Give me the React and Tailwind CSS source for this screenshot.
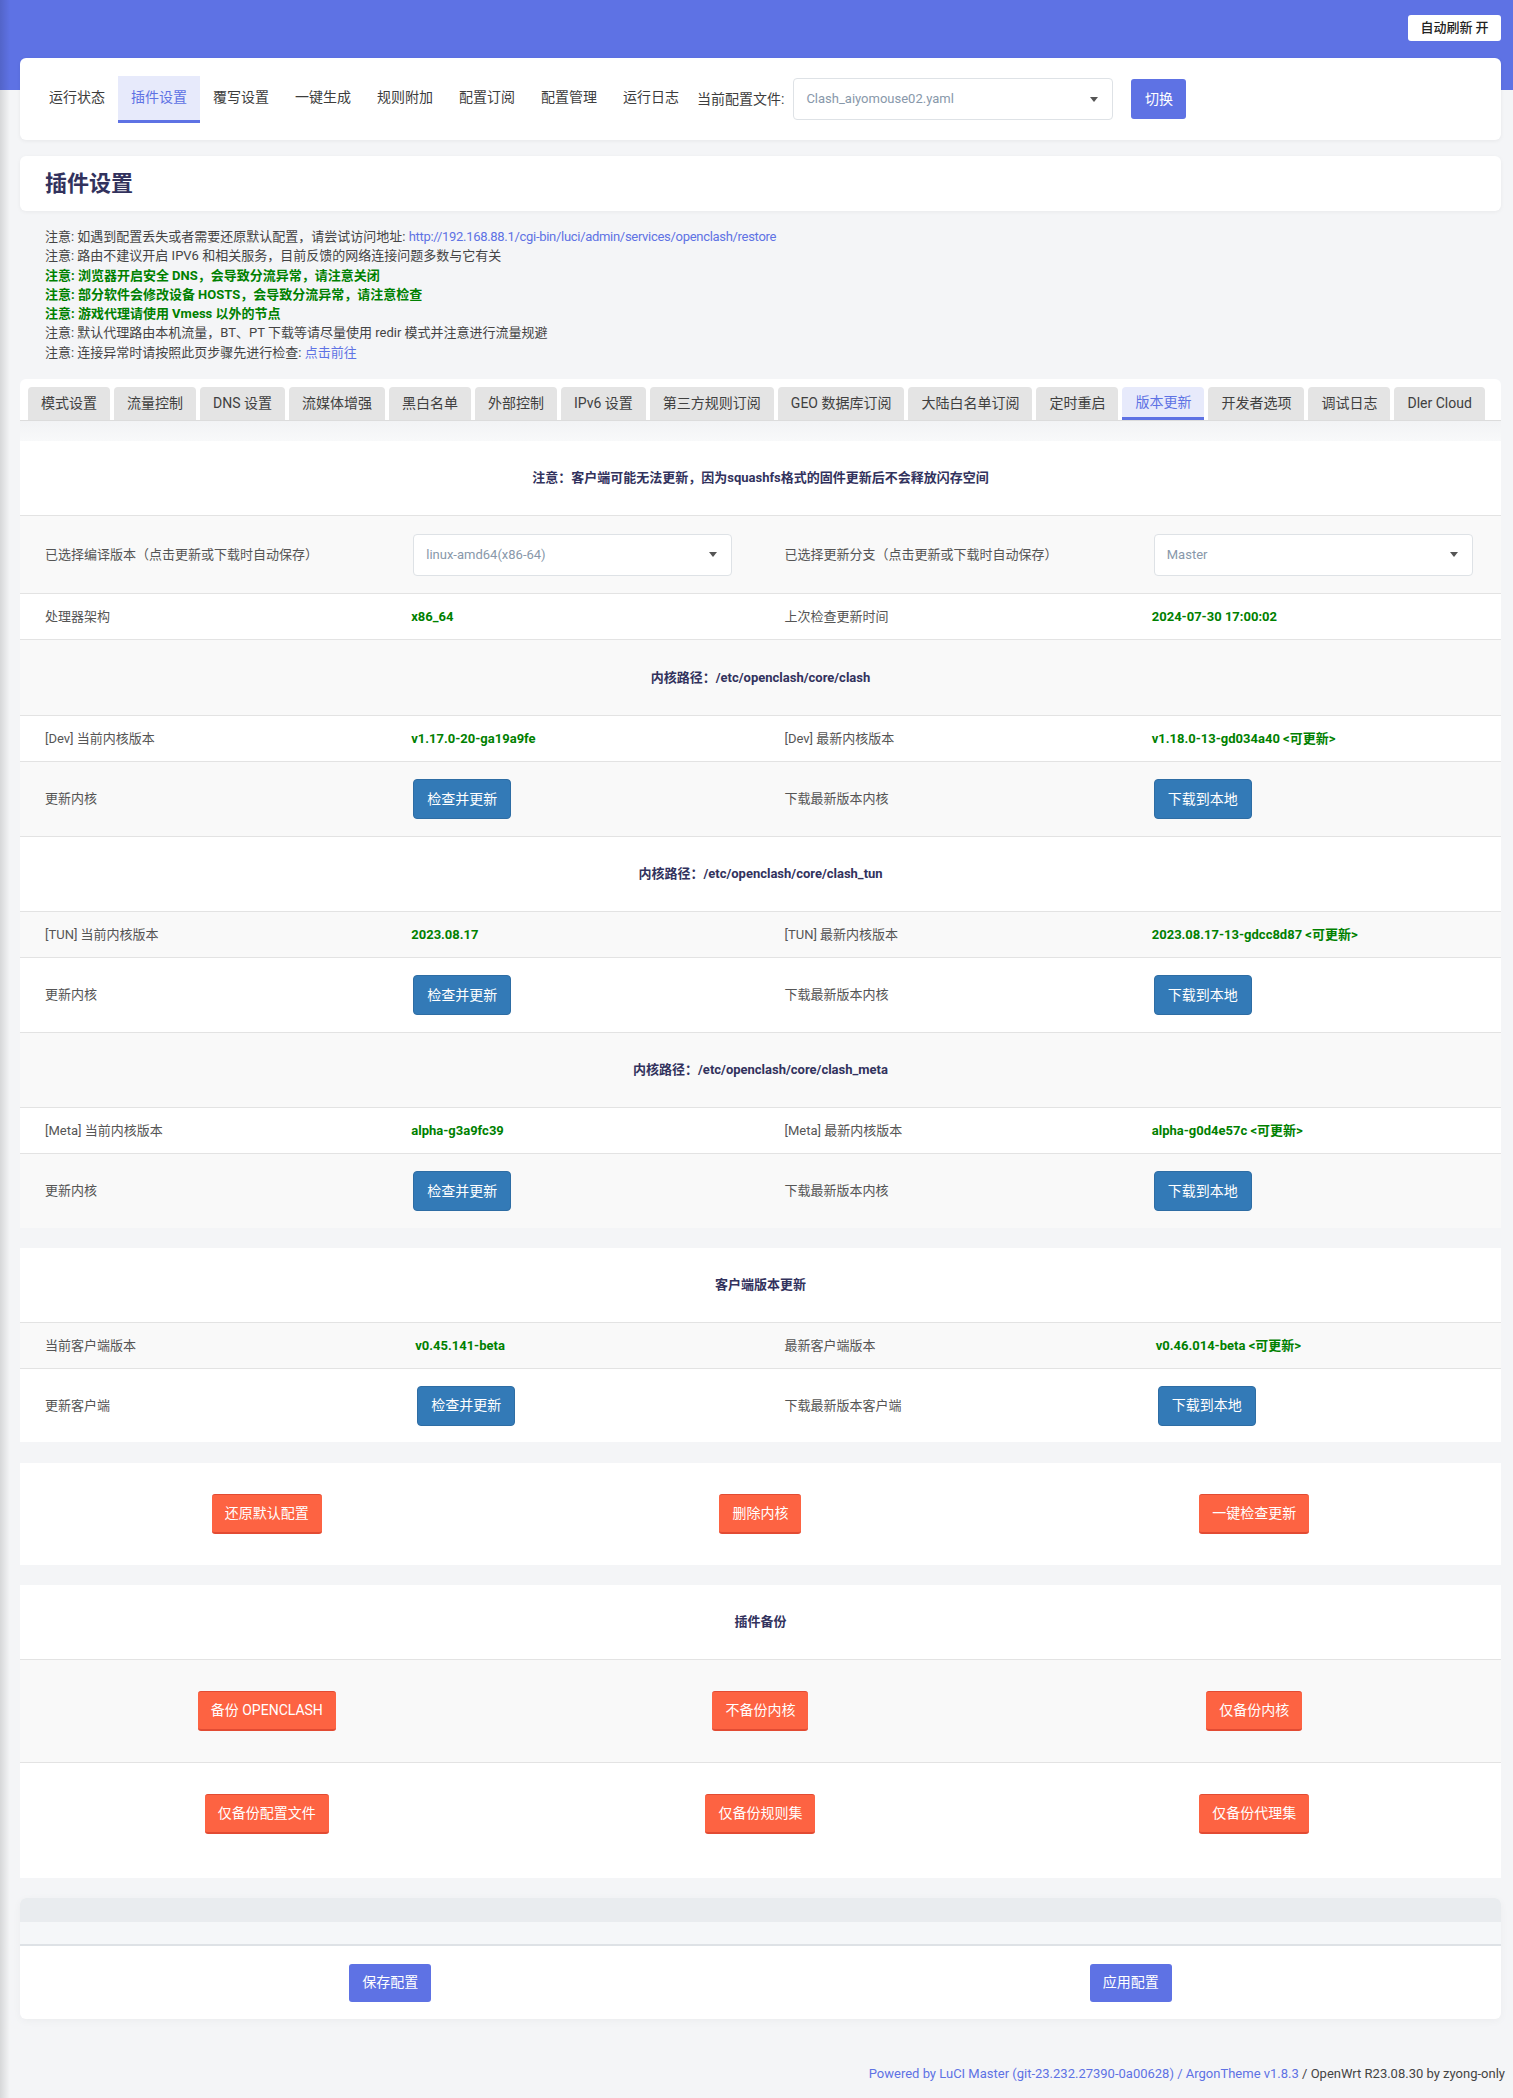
import React from 'react';

const navItems = ['运行状态', '插件设置', '覆写设置', '一键生成', '规则附加', '配置订阅', '配置管理', '运行日志'];
const tabs = ['模式设置', '流量控制', 'DNS 设置', '流媒体增强', '黑白名单', '外部控制', 'IPv6 设置', '第三方规则订阅', 'GEO 数据库订阅', '大陆白名单订阅', '定时重启', '版本更新', '开发者选项', '调试日志', 'Dler Cloud'];

function Caret() {
    return (
        <svg width="8" height="5" viewBox="0 0 8 5" className="shrink-0">
            <polygon points="0,0 8,0 4,5" fill="#555" />
        </svg>
    );
}

function Select({ value }) {
    return (
        <div className="h-[42px] w-full bg-white border border-[#dee2e6] rounded-[4px] flex items-center justify-between pl-[12px] pr-[14px] text-[13px] text-[#8898aa]">
            <span>{value}</span>
            <Caret />
        </div>
    );
}

function BlueBtn({ children }) {
    return (
        <button type="button" className="h-[40px] px-[13px] rounded-[4px] bg-[#337ab7] border border-[#2e6da4] text-white text-[14px] whitespace-nowrap">
            {children}
        </button>
    );
}

function OrangeBtn({ children }) {
    return (
        <button type="button" className="h-[40px] px-[13px] rounded-[3px] bg-[#fd6342] border-t border-b-2 border-[#e24b33] text-white text-[14px] whitespace-nowrap">
            {children}
        </button>
    );
}

function Heading({ h, gray, top, children }) {
    return (
        <div
            className={
                'flex items-center justify-center text-[13px] font-bold text-[#32325d] ' +
                (gray ? 'bg-[#f9f9f9] ' : 'bg-white ') +
                (top ? '' : 'border-t border-[#e3e3e3] ')
            }
            style={{ height: h }}
        >
            {children}
        </div>
    );
}

function Row({ h, gray, cells }) {
    return (
        <div
            className={'grid grid-cols-4 items-center border-t border-[#e3e3e3] text-[13px] ' + (gray ? 'bg-[#f9f9f9]' : 'bg-white')}
            style={{ height: h }}
        >
            <div className="pl-[25px] text-[#555]">{cells[0]}</div>
            <div className="pl-[21px] pr-[29px]">{cells[1]}</div>
            <div className="pl-[24px] text-[#555]">{cells[2]}</div>
            <div className="pl-[21px] pr-[28px]">{cells[3]}</div>
        </div>
    );
}

function Val({ children, upd }) {
    return (
        <span className="font-bold text-[#008000]">
            {children}
            {upd && ' <可更新>'}
        </span>
    );
}

function CoreBlock({ path, tag, cur, latest, startGray, headH }) {
    return (
        <>
            <Heading h={headH} gray={startGray}>内核路径：{path}</Heading>
            <Row h={46} gray={!startGray} cells={[`[${tag}] 当前内核版本`, <Val>{cur}</Val>, `[${tag}] 最新内核版本`, <Val upd>{latest}</Val>]} />
            <Row h={75} gray={startGray} cells={['更新内核', <span className="pl-[2px]"><BlueBtn>检查并更新</BlueBtn></span>, '下载最新版本内核', <span className="pl-[2px]"><BlueBtn>下载到本地</BlueBtn></span>]} />
        </>
    );
}

export default function App() {
    return (
        <div className="relative min-h-screen bg-[#f4f5f7] font-['Roboto','Noto_Sans_CJK_SC',sans-serif] text-[#32325d]">
            <div className="h-[90px] bg-[#5e72e4] flex justify-end pt-[15px] pr-[12px]">
                <button type="button" className="h-[26px] w-[93px] bg-white rounded-[3px] text-[13px] font-medium text-[#222]">
                    自动刷新 开
                </button>
            </div>

            <div className="-mt-[32px] pl-[20px] pr-[12px]">
                {/* top navigation */}
                <div className="h-[82px] bg-white rounded-[6px] shadow-[0_1px_4px_rgba(0,0,0,0.06)] flex items-center pl-[16px]">
                    {navItems.map((item) => (
                        <div
                            key={item}
                            className={
                                'h-[47px] px-[13px] flex items-center text-[14px] whitespace-nowrap border-b-[3px] ' +
                                (item === '插件设置' ? 'bg-[#e7eafb] text-[#5e72e4] border-[#5e72e4]' : 'text-[#3d3d3d] border-transparent')
                            }
                        >
                            {item}
                        </div>
                    ))}
                    <span className="ml-[5px] text-[14px] text-[#3d3d3d] whitespace-nowrap">当前配置文件:</span>
                    <div className="ml-[9px] w-[320px]">
                        <Select value="Clash_aiyomouse02.yaml" />
                    </div>
                    <button type="button" className="ml-[18px] h-[40px] w-[55px] bg-[#5e72e4] rounded-[3px] text-white text-[14px]">
                        切换
                    </button>
                </div>

                {/* page title */}
                <div className="mt-[16px] h-[55px] bg-white rounded-[6px] shadow-[0_1px_4px_rgba(0,0,0,0.05)] flex items-center pl-[25px]">
                    <h2 className="text-[22px] font-bold text-[#32325d]">插件设置</h2>
                </div>

                {/* notes */}
                <div className="mt-[16px] pl-[25px] text-[13px] leading-[19.3px] text-[#444]">
                    <div>注意: 如遇到配置丢失或者需要还原默认配置，请尝试访问地址: <span className="text-[#5e72e4] tracking-[-0.3px]">http://192.168.88.1/cgi-bin/luci/admin/services/openclash/restore</span></div>
                    <div>注意: 路由不建议开启 IPV6 和相关服务，目前反馈的网络连接问题多数与它有关</div>
                    <div className="font-bold text-[#008000]">注意: 浏览器开启安全 DNS，会导致分流异常，请注意关闭</div>
                    <div className="font-bold text-[#008000]">注意: 部分软件会修改设备 HOSTS，会导致分流异常，请注意检查</div>
                    <div className="font-bold text-[#008000]">注意: 游戏代理请使用 Vmess 以外的节点</div>
                    <div>注意: 默认代理路由本机流量，BT、PT 下载等请尽量使用 redir 模式并注意进行流量规避</div>
                    <div>注意: 连接异常时请按照此页步骤先进行检查: <span className="text-[#5e72e4]">点击前往</span></div>
                </div>

                {/* tabs + core table */}
                <div className="mt-[17px] bg-white rounded-t-[6px] overflow-hidden">
                    <div className="flex gap-[4px] pt-[8px] px-[8px] border-b border-[#dcdcdc]">
                        {tabs.map((t) => (
                            <div
                                key={t}
                                className={
                                    'h-[33px] px-[13px] shrink-0 whitespace-nowrap flex items-center rounded-t-[4px] text-[14px] ' +
                                    (t === '版本更新' ? 'bg-[#e7eafb] text-[#5e72e4] border-b-[3px] border-[#5e72e4]' : 'bg-[#e4e4e4] text-[#404040]')
                                }
                            >
                                {t}
                            </div>
                        ))}
                    </div>
                    <div className="h-[20px] bg-linear-to-b from-[#f2f3f5] to-[#f8f9fa]" />

                    <Heading h={74} top>注意：客户端可能无法更新，因为squashfs格式的固件更新后不会释放闪存空间</Heading>
                    <Row h={78} gray cells={['已选择编译版本（点击更新或下载时自动保存）', <span className="block pl-[2px]"><Select value="linux-amd64(x86-64)" /></span>, '已选择更新分支（点击更新或下载时自动保存）', <span className="block pl-[2px]"><Select value="Master" /></span>]} />
                    <Row h={46} cells={['处理器架构', <Val>x86_64</Val>, '上次检查更新时间', <Val>2024-07-30 17:00:02</Val>]} />
                    <CoreBlock path="/etc/openclash/core/clash" tag="Dev" cur="v1.17.0-20-ga19a9fe" latest="v1.18.0-13-gd034a40" startGray headH={76} />
                    <CoreBlock path="/etc/openclash/core/clash_tun" tag="TUN" cur="2023.08.17" latest="2023.08.17-13-gdcc8d87" headH={75} />
                    <CoreBlock path="/etc/openclash/core/clash_meta" tag="Meta" cur="alpha-g3a9fc39" latest="alpha-g0d4e57c" startGray headH={75} />
                </div>

                {/* client */}
                <div className="mt-[20px] bg-white">
                    <Heading h={74} top>客户端版本更新</Heading>
                    <Row h={46} gray cells={['当前客户端版本', <span className="pl-[4px]"><Val>v0.45.141-beta</Val></span>, '最新客户端版本', <span className="pl-[4px]"><Val upd>v0.46.014-beta</Val></span>]} />
                    <Row h={74} cells={['更新客户端', <span className="pl-[6px]"><BlueBtn>检查并更新</BlueBtn></span>, '下载最新版本客户端', <span className="pl-[6px]"><BlueBtn>下载到本地</BlueBtn></span>]} />
                </div>

                {/* actions */}
                <div className="mt-[21px] h-[102px] bg-white grid grid-cols-3 items-center justify-items-center">
                    <OrangeBtn>还原默认配置</OrangeBtn>
                    <OrangeBtn>删除内核</OrangeBtn>
                    <OrangeBtn>一键检查更新</OrangeBtn>
                </div>

                {/* backup */}
                <div className="mt-[20px] bg-white pb-[13px]">
                    <Heading h={74} top>插件备份</Heading>
                    <div className="h-[103px] bg-[#f9f9f9] border-t border-[#e3e3e3] grid grid-cols-3 items-center justify-items-center">
                        <OrangeBtn>备份 OPENCLASH</OrangeBtn>
                        <OrangeBtn>不备份内核</OrangeBtn>
                        <OrangeBtn>仅备份内核</OrangeBtn>
                    </div>
                    <div className="h-[103px] border-t border-[#e3e3e3] grid grid-cols-3 items-center justify-items-center">
                        <OrangeBtn>仅备份配置文件</OrangeBtn>
                        <OrangeBtn>仅备份规则集</OrangeBtn>
                        <OrangeBtn>仅备份代理集</OrangeBtn>
                    </div>
                </div>

                {/* save / apply */}
                <div className="mt-[20px] bg-white rounded-[6px] overflow-hidden shadow-[0_2px_8px_rgba(0,0,0,0.04)]">
                    <div className="h-[24px] bg-[#e9ecef]" />
                    <div className="h-[24px] bg-[#f5f7f9] border-b-2 border-[#dee2e6]" />
                    <div className="h-[73px] grid grid-cols-2 items-center justify-items-center">
                        <button type="button" className="h-[38px] px-[13px] rounded-[3px] bg-[#5e72e4] text-white text-[14px]">保存配置</button>
                        <button type="button" className="h-[38px] px-[13px] rounded-[3px] bg-[#5e72e4] text-white text-[14px]">应用配置</button>
                    </div>
                </div>
            </div>

            <div className="h-[78px] flex items-end justify-end pb-[14px] pr-[8px] text-[13px] text-[#444]">
                <span>
                    <span className="text-[#5e72e4]">Powered by LuCI Master (git-23.232.27390-0a00628) / ArgonTheme v1.8.3</span>
                    {' / OpenWrt R23.08.30 by zyong-only'}
                </span>
            </div>

            <div className="pointer-events-none absolute inset-y-0 left-0 w-[10px] bg-linear-to-r from-[rgba(0,0,0,0.12)] to-transparent" />
        </div>
    );
}
